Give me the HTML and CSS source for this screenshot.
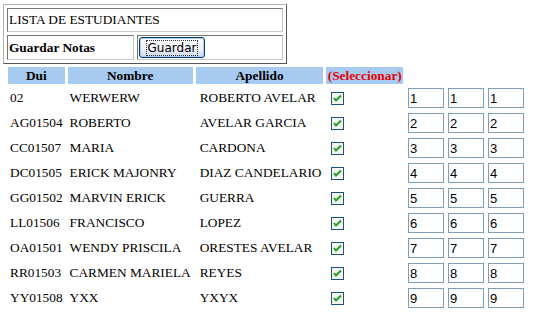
FILE: index.html
```html
<!DOCTYPE html>
<html lang="es">
  <head>
    <meta charset="UTF-8" />
    <title>Lista de Estudiantes</title>
    <link rel="stylesheet" href="styles.css">
  </head>

  <body>
    <!-- Encabezado -->
    <table class="top-table">
      <tr>
        <td colspan="2" class="title-cell">LISTA DE ESTUDIANTES</td>
      </tr>
      <tr>
        <td class="label-cell"><b>Guardar Notas</b></td>
        <td class="button-cell">
          <button type="button" class="save-btn"><span>Guardar</span></button>
        </td>
      </tr>
    </table>

    <!-- Lista -->
    <table class="list-table">
      <tr class="head-row">
        <th class="col-dui">Dui</th>
        <th class="col-nombre">Nombre</th>
        <th class="col-apellido">Apellido</th>
        <th class="col-sel">(Seleccionar)</th>
        <td class="col-notas"></td>
      </tr>
      <tr>
        <td>02</td><td>WERWERW</td><td class="ape">ROBERTO AVELAR</td>
        <td class="chk"><svg width="13" height="13" viewBox="0 0 13 13"><rect x="0.5" y="0.5" width="12" height="12" fill="#f4f4f0" stroke="#1c5180"/><path d="M3 6 L5 8.5 L10 3.5" fill="none" stroke="#21a121" stroke-width="2"/></svg></td>
        <td class="notas"><input type="text" value="1"><input type="text" value="1"><input type="text" value="1"></td>
      </tr>
      <tr>
        <td>AG01504</td><td>ROBERTO</td><td class="ape">AVELAR GARCIA</td>
        <td class="chk"><svg width="13" height="13" viewBox="0 0 13 13"><rect x="0.5" y="0.5" width="12" height="12" fill="#f4f4f0" stroke="#1c5180"/><path d="M3 6 L5 8.5 L10 3.5" fill="none" stroke="#21a121" stroke-width="2"/></svg></td>
        <td class="notas"><input type="text" value="2"><input type="text" value="2"><input type="text" value="2"></td>
      </tr>
      <tr>
        <td>CC01507</td><td>MARIA</td><td class="ape">CARDONA</td>
        <td class="chk"><svg width="13" height="13" viewBox="0 0 13 13"><rect x="0.5" y="0.5" width="12" height="12" fill="#f4f4f0" stroke="#1c5180"/><path d="M3 6 L5 8.5 L10 3.5" fill="none" stroke="#21a121" stroke-width="2"/></svg></td>
        <td class="notas"><input type="text" value="3"><input type="text" value="3"><input type="text" value="3"></td>
      </tr>
      <tr>
        <td>DC01505</td><td>ERICK MAJONRY</td><td class="ape">DIAZ CANDELARIO</td>
        <td class="chk"><svg width="13" height="13" viewBox="0 0 13 13"><rect x="0.5" y="0.5" width="12" height="12" fill="#f4f4f0" stroke="#1c5180"/><path d="M3 6 L5 8.5 L10 3.5" fill="none" stroke="#21a121" stroke-width="2"/></svg></td>
        <td class="notas"><input type="text" value="4"><input type="text" value="4"><input type="text" value="4"></td>
      </tr>
      <tr>
        <td>GG01502</td><td>MARVIN ERICK</td><td class="ape">GUERRA</td>
        <td class="chk"><svg width="13" height="13" viewBox="0 0 13 13"><rect x="0.5" y="0.5" width="12" height="12" fill="#f4f4f0" stroke="#1c5180"/><path d="M3 6 L5 8.5 L10 3.5" fill="none" stroke="#21a121" stroke-width="2"/></svg></td>
        <td class="notas"><input type="text" value="5"><input type="text" value="5"><input type="text" value="5"></td>
      </tr>
      <tr>
        <td>LL01506</td><td>FRANCISCO</td><td class="ape">LOPEZ</td>
        <td class="chk"><svg width="13" height="13" viewBox="0 0 13 13"><rect x="0.5" y="0.5" width="12" height="12" fill="#f4f4f0" stroke="#1c5180"/><path d="M3 6 L5 8.5 L10 3.5" fill="none" stroke="#21a121" stroke-width="2"/></svg></td>
        <td class="notas"><input type="text" value="6"><input type="text" value="6"><input type="text" value="6"></td>
      </tr>
      <tr>
        <td>OA01501</td><td>WENDY PRISCILA</td><td class="ape">ORESTES AVELAR</td>
        <td class="chk"><svg width="13" height="13" viewBox="0 0 13 13"><rect x="0.5" y="0.5" width="12" height="12" fill="#f4f4f0" stroke="#1c5180"/><path d="M3 6 L5 8.5 L10 3.5" fill="none" stroke="#21a121" stroke-width="2"/></svg></td>
        <td class="notas"><input type="text" value="7"><input type="text" value="7"><input type="text" value="7"></td>
      </tr>
      <tr>
        <td>RR01503</td><td>CARMEN MARIELA</td><td class="ape">REYES</td>
        <td class="chk"><svg width="13" height="13" viewBox="0 0 13 13"><rect x="0.5" y="0.5" width="12" height="12" fill="#f4f4f0" stroke="#1c5180"/><path d="M3 6 L5 8.5 L10 3.5" fill="none" stroke="#21a121" stroke-width="2"/></svg></td>
        <td class="notas"><input type="text" value="8"><input type="text" value="8"><input type="text" value="8"></td>
      </tr>
      <tr>
        <td>YY01508</td><td>YXX</td><td class="ape">YXYX</td>
        <td class="chk"><svg width="13" height="13" viewBox="0 0 13 13"><rect x="0.5" y="0.5" width="12" height="12" fill="#f4f4f0" stroke="#1c5180"/><path d="M3 6 L5 8.5 L10 3.5" fill="none" stroke="#21a121" stroke-width="2"/></svg></td>
        <td class="notas"><input type="text" value="9"><input type="text" value="9"><input type="text" value="9"></td>
      </tr>
    </table>
  </body>
</html>
```

FILE: styles.css
```css
/* General */

body {
  font-family: "Liberation Serif", "Times New Roman", "DejaVu Serif", serif;
  font-size: 13.33px;
  margin: 4px 3px;
  background: white;
  color: black;
}

table {
  font-family: "Liberation Serif", "Times New Roman", "DejaVu Serif", serif;
  font-size: 13.33px;
}

/* Encabezado */

.top-table {
  width: 284px;
  border-spacing: 3px;
  border: 1px solid;
  border-color: #b0b0b0 #555 #555 #b0b0b0;
}

.top-table td {
  border: 1px solid;
  border-color: #777 #c8c8c8 #c8c8c8 #777;
  padding: 1px 1px;
}

.title-cell {
  height: 20px;
}

.label-cell {
  width: 123px;
  height: 21px;
}

.button-cell {
  padding: 1px;
}

.save-btn {
  font-family: "DejaVu Sans", Verdana, sans-serif;
  font-size: 12px;
  width: 66px;
  height: 21px;
  padding: 0;
  border: 1px solid #003c74;
  border-radius: 3px;
  background: linear-gradient(#fefefe, #eef0f4 60%, #c8d4ec);
  box-shadow: inset 0 0 0 1px #b8cdf2;
  color: black;
}

.save-btn span {
  border: 1px dotted #333;
  padding: 0 1px;
}

/* Lista */

.list-table {
  margin-top: 0;
  margin-left: 2px;
  border-spacing: 3px;
}

.list-table th {
  background-color: #a6caf0;
  font-weight: bold;
  height: 17px;
  padding: 0;
}

.list-table td {
  padding: 1px 2px;
  height: 20px;
  white-space: nowrap;
}

.list-table .head-row td {
  height: auto;
  padding: 0;
}

.col-dui {
  width: 56px;
}

.col-nombre {
  width: 121px;
}

.col-apellido {
  width: 127px;
}

.col-sel {
  width: 81px;
  color: #e80000;
}

.list-table td.ape {
  padding-left: 4px;
}

.list-table td.chk {
  padding-left: 5px;
}

.chk svg {
  display: block;
}

.notas {
  font-size: 0;
}

.notas input {
  width: 32px;
  height: 18px;
  margin: 0 4px 0 0;
  padding: 0 1px;
  border: 1px solid #7f9db9;
  font-family: "Liberation Sans", Arial, sans-serif;
  font-size: 13px;
  box-sizing: content-box;
}
```
